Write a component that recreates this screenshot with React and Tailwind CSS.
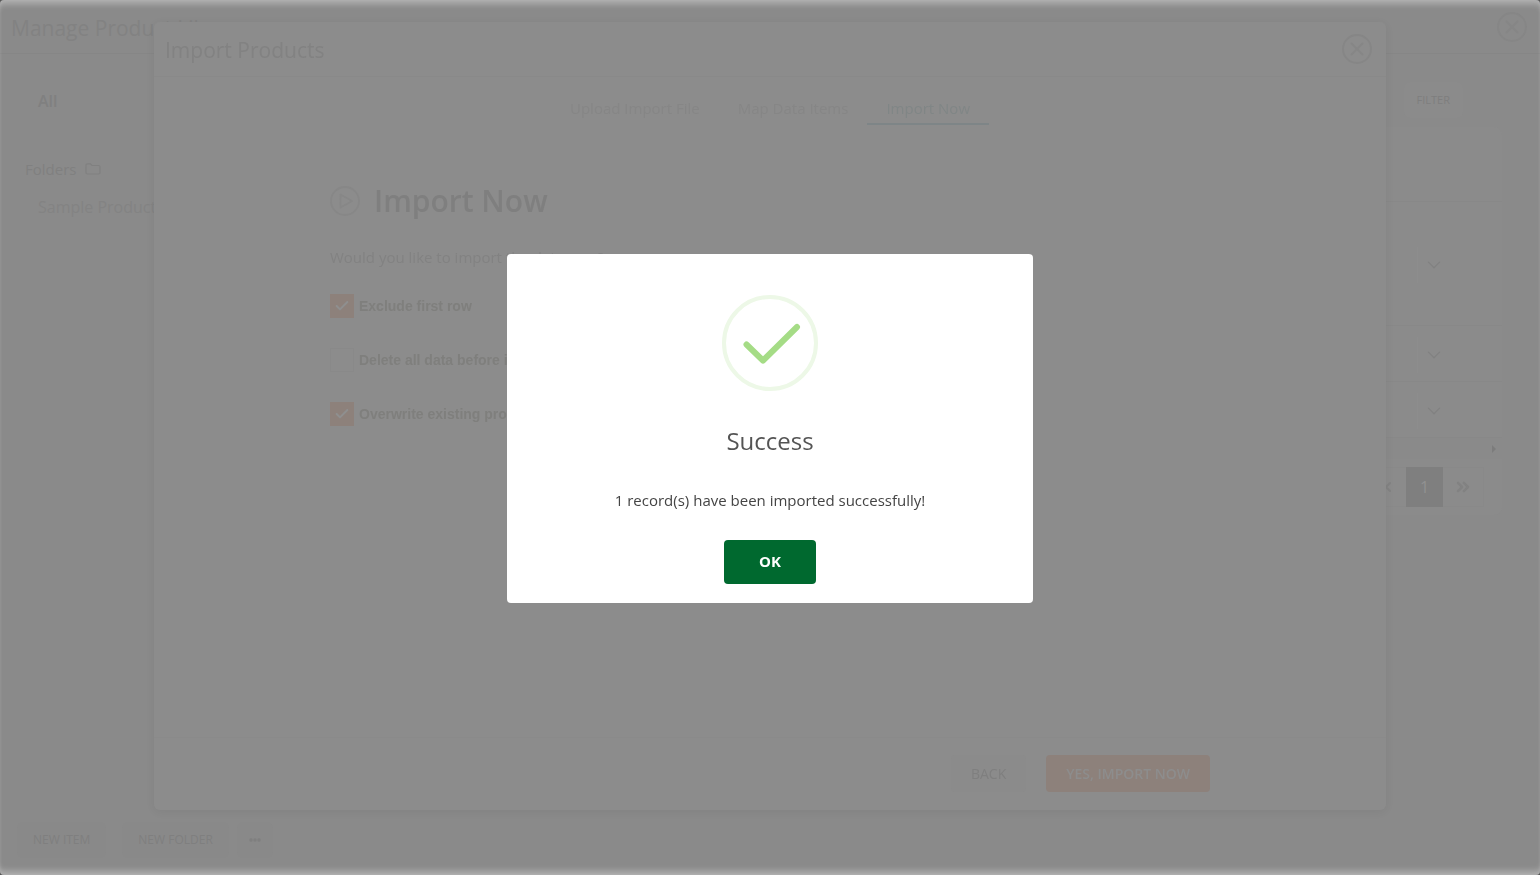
import { ChevronDown, ChevronLeft, ChevronsRight, Check, X } from 'lucide-react';

const TABS = ['Upload Import File', 'Map Data Items', 'Import Now'];

const OPTIONS = [
  { id: 'exclude-first', label: 'Exclude first row', checked: true },
  { id: 'delete-all', label: 'Delete all data before import', checked: false },
  { id: 'overwrite', label: 'Overwrite existing products', checked: true },
];

const ROWS = ['h-[124px]', 'h-14', 'h-14'];

function CloseButton({ label }) {
  return (
    <button
      type="button"
      aria-label={label}
      className="flex h-[30px] w-[30px] items-center justify-center rounded-full border-2 border-[#868686] text-[#868686]"
    >
      <X className="h-[22px] w-[22px] shrink-0" strokeWidth={2} />
    </button>
  );
}

function FolderIcon() {
  return (
    <svg viewBox="0 0 16 12" className="h-3 w-4" fill="none" stroke="currentColor" strokeWidth="1.2">
      <path d="M1 2Q1 .8 2.200 .8H5.500L7 2.500H13.800Q15 2.500 15 3.700V9.800Q15 11 13.800 11H2.200Q1 11 1 9.800Z" />
    </svg>
  );
}

function PlayIcon() {
  return (
    <svg viewBox="0 0 30 30" className="h-[30px] w-[30px] text-[#878787]" fill="none" stroke="currentColor" strokeWidth="1.8">
      <circle cx="15" cy="15" r="14" />
      <path d="M10.500 8.500V21.500L22 15Z" strokeLinejoin="round" />
    </svg>
  );
}

function Sidebar() {
  return (
    <nav className="w-[240px] shrink-0 pt-[35px] text-[#808080]">
      <a href="#all" className="block pl-[38px] text-base font-semibold leading-6">All</a>
      <div className="mt-11 flex items-center gap-[9px] pl-[25px] text-[15px] font-medium leading-6">
        Folders
        <FolderIcon />
      </div>
      <a href="#sample" className="mt-[14px] block pl-[38px] text-base leading-6 text-[#838383]">Sample Products</a>
    </nav>
  );
}

function ProductList() {
  return (
    <main className="flex flex-1 flex-col pr-[38px] pt-7">
      <div className="flex justify-end pr-[39px]">
        <button type="button" className="h-9 rounded-md bg-[#8b8b8b] px-[13px] text-[11px] text-[#7e7e7e]">
          FILTER
        </button>
      </div>
      <div className="mt-[9px] rounded-t-lg bg-[#8b8b8b]">
        <div className="h-[75px] border-b border-[#888888]" />
        {ROWS.map((height, index) => (
          <div key={index} className={`flex items-center justify-end border-b border-[#888888] pr-[57px] pt-[2px] ${height}`}>
            <button
              type="button"
              aria-label="Row actions"
              className="flex h-9 w-7 items-center justify-end border-l border-[#8d8d8d] text-[#828282]"
            >
              <ChevronDown className="h-[22px] w-[22px] shrink-0" strokeWidth={1.5} />
            </button>
          </div>
        ))}
      </div>
      <div className="flex h-[21px] items-center justify-end pr-[6px] text-[#7c7c7c]">
        <svg viewBox="0 0 4 8" className="h-2 w-1" fill="currentColor"><path d="M0 0 4 4 0 8Z" /></svg>
      </div>
      <div className="flex items-center justify-end rounded-b-lg bg-[#8b8b8b] py-2 pr-[18px]">
        <div className="flex h-10 items-center border border-[#898989] text-[#828282]">
          <button type="button" aria-label="Previous page" className="px-[10px]"><ChevronLeft className="h-4 w-4" strokeWidth={3} /></button>
          <button type="button" className="h-10 w-[37px] bg-[#7f7f7f] text-base text-[#919191]">1</button>
          <button type="button" aria-label="Last page" className="flex w-10 justify-center"><ChevronsRight className="h-5 w-5" strokeWidth={3} /></button>
        </div>
      </div>
    </main>
  );
}

function ImportDialog() {
  return (
    <section
      role="dialog"
      aria-label="Import Products"
      className="flex h-[90vh] w-4/5 flex-col rounded-md bg-[#8c8c8c] shadow-[0_2px_10px_rgba(0,0,0,0.06)]"
    >
      <header className="flex h-[55px] shrink-0 items-center justify-between border-b border-[#898989] pl-[11px] pr-[14px]">
        <h2 className="pt-[2px] text-[21px] leading-8 text-[#828282]">Import Products</h2>
        <CloseButton label="Close import" />
      </header>

      <div className="mt-4 flex justify-center" role="tablist">
        {TABS.map((tab) => (
          <button
            key={tab}
            type="button"
            role="tab"
            aria-selected={tab === 'Import Now'}
            className={`h-8 border-b-2 px-[19px] text-[15px] ${
              tab === 'Import Now' ? 'border-[#7e8587] text-[#808686]' : 'border-transparent text-[#868686]'
            }`}
          >
            {tab}
          </button>
        ))}
      </div>

      <div className="flex-1 px-44 pt-[54px]">
        <div className="flex items-center gap-[14px]">
          <PlayIcon />
          <h3 className="text-3xl font-semibold leading-[44px] text-[#7f7f7f]">Import Now</h3>
        </div>
        <p className="mt-[22px] text-[15px] leading-6 text-[#828282]">Would you like to import the data now?</p>
        <div className="mt-[25px] flex flex-col gap-[30px]">
          {OPTIONS.map((option) => (
            <label
              key={option.id}
              htmlFor={option.id}
              className="flex items-center gap-[5px] font-['Liberation_Sans',sans-serif] text-sm font-bold leading-6 text-[#7f7f7d]"
            >
              <span className="grid">
                <input
                  id={option.id}
                  type="checkbox"
                  defaultChecked={option.checked}
                  className="col-start-1 row-start-1 h-6 w-6 appearance-none border border-[#898989] checked:border-[#8d817b] checked:bg-[#8d817b]"
                />
                {option.checked && (
                  <Check className="pointer-events-none col-start-1 row-start-1 h-4 w-4 place-self-center text-[#8f8f8f]" strokeWidth={3} />
                )}
              </span>
              {option.label}
            </label>
          ))}
        </div>
      </div>

      <footer className="flex h-[73px] shrink-0 items-center justify-end gap-5 border-t border-[#8a8a8a] pr-44">
        <button type="button" className="h-[37px] rounded bg-[#8b8b8b] px-5 text-sm text-[#7f7f7f]">BACK</button>
        <button type="button" className="h-[37px] rounded bg-[#8d817b] px-5 text-sm font-semibold text-[#8d8d8d]">
          YES, IMPORT NOW
        </button>
      </footer>
    </section>
  );
}

function SuccessDialog() {
  return (
    <section
      role="alertdialog"
      aria-labelledby="success-title"
      className="flex w-[526px] flex-col items-center rounded bg-white px-5 pb-[19px] pt-[41px]"
    >
      <svg viewBox="0 0 96 96" className="h-24 w-24" fill="none">
        <circle cx="48" cy="48" r="46" stroke="#edf8e7" strokeWidth="4" />
        <path d="M24.500 49.500 41 65.500 75 32" stroke="#a5dc86" strokeWidth="6" strokeLinecap="round" strokeLinejoin="round" />
      </svg>
      <h2 id="success-title" className="mt-8 text-2xl leading-9 text-[#545454]">Success</h2>
      <p className="mt-[29px] text-[15px] leading-6 text-[#444444]">1 record(s) have been imported successfully!</p>
      <button type="button" className="mt-7 h-11 w-[92px] rounded bg-[#00692f] pb-[2px] text-[15px] font-bold text-white">
        OK
      </button>
    </section>
  );
}

export default function App() {
  return (
    <div className="min-h-screen bg-[#555555] font-['Open_Sans',sans-serif]">
      <div className="flex min-h-screen flex-col rounded-sm bg-[#8a8a8a]">
        <header className="flex h-[54px] items-center justify-between border-b border-[#868686] pl-[11px] pr-[13px]">
          <h1 className="pt-[2px] text-[21px] leading-8 text-[#828282]">Manage Product Library</h1>
          <CloseButton label="Close products" />
        </header>
        <div className="flex flex-1">
          <Sidebar />
          <ProductList />
        </div>
        <footer className="flex items-center pb-[17px] pl-[17px] text-xs text-[#7f7f7f]">
          <button type="button" className="mr-4 h-9 rounded-md bg-[#898989] px-4">NEW ITEM</button>
          <button type="button" className="mr-2 h-9 rounded-md bg-[#898989] px-4">NEW FOLDER</button>
          <button type="button" aria-label="More" className="flex h-9 w-9 items-center justify-center rounded-md bg-[#898989]">
            <svg viewBox="0 0 12 4" className="h-1 w-3" fill="currentColor">
              <circle cx="2" cy="2" r="1.700" /><circle cx="6" cy="2" r="1.700" /><circle cx="10" cy="2" r="1.700" />
            </svg>
          </button>
        </footer>
      </div>
      <div className="fixed inset-0 flex items-start justify-center pt-[22px]">
        <ImportDialog />
      </div>
      <div className="fixed inset-0 flex items-center justify-center rounded-sm pb-[18px] shadow-[inset_0_8px_6px_-4px_rgba(255,255,255,0.33),inset_0_-8px_6px_-4px_rgba(255,255,255,0.33),inset_0_0_4px_rgba(255,255,255,0.06)]">
        <SuccessDialog />
      </div>
    </div>
  );
}
